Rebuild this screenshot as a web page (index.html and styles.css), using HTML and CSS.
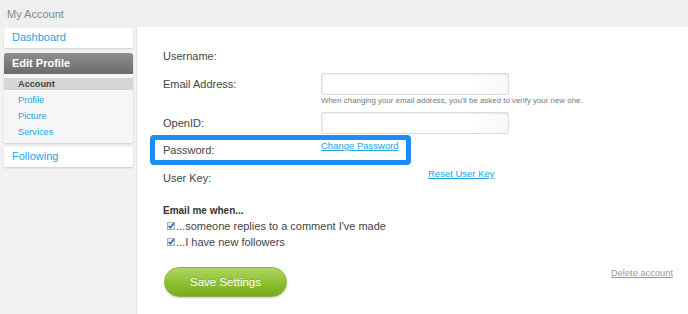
FILE: index.html
```html
<!DOCTYPE html>
<html lang="en">
<head>
  <meta charset="UTF-8" />
  <title>My Account</title>
  <link rel="stylesheet" href="styles.css">
</head>
<body>

  <header class="topbar">My Account</header>

  <div class="layout">
    <aside class="sidebar">
      <a class="side-card" href="#dashboard">Dashboard</a>

      <div class="side-group">
        <div class="side-group-title">Edit Profile</div>
        <ul class="side-sub">
          <li class="active">Account</li>
          <li><a href="#profile">Profile</a></li>
          <li><a href="#picture">Picture</a></li>
          <li><a href="#services">Services</a></li>
        </ul>
      </div>

      <a class="side-card" href="#following">Following</a>
    </aside>

    <main class="content">
      <div class="field field-username">
        <label>Username:</label>
        <span></span>
      </div>

      <div class="field field-email">
        <label>Email Address:</label>
        <input type="text" class="text-input">
      </div>
      <p class="hint">When changing your email address, you'll be asked to verify your new one.</p>

      <div class="field field-openid">
        <label>OpenID:</label>
        <input type="text" class="text-input">
      </div>

      <div class="field field-password">
        <label>Password:</label>
        <a href="#password" class="top-link">Change Password</a>
      </div>

      <div class="field field-key">
        <label>User Key:</label>
        <a href="#key" class="top-link reset-link">Reset User Key</a>
      </div>

      <h4 class="notify-title">Email me when...</h4>
      <label class="check-row">
        <span class="check"><svg viewBox="0 0 8 8" width="8" height="8"><rect x="0.5" y="0.5" width="7" height="7" fill="#eef2f8" stroke="#a4adb9"/><path d="M1.6 3.9 L3.3 5.8 L6.8 1.2" fill="none" stroke="#2a63b8" stroke-width="1.5"/></svg></span>
        ...someone replies to a comment I've made
      </label>
      <label class="check-row">
        <span class="check"><svg viewBox="0 0 8 8" width="8" height="8"><rect x="0.5" y="0.5" width="7" height="7" fill="#eef2f8" stroke="#a4adb9"/><path d="M1.6 3.9 L3.3 5.8 L6.8 1.2" fill="none" stroke="#2a63b8" stroke-width="1.5"/></svg></span>
        ...I have new followers
      </label>

      <div class="actions">
        <button class="save-btn">Save Settings</button>
        <a href="#delete" class="delete-link">Delete account</a>
      </div>
    </main>
  </div>

</body>
</html>
```

FILE: styles.css
```css
:root {
  --link-color: #22a5e2;
  --label-color: #444;
  --highlight: #1b8df7;
}

* {
  margin: 0;
  padding: 0;
  box-sizing: border-box;
  font-family: 'Liberation Sans', Arial, sans-serif;
}

body {
  width: 688px;
  height: 314px;
  overflow: hidden;
  background: #fff;
  display: flex;
  flex-direction: column;
}

.topbar {
  height: 27px;
  padding-left: 7px;
  line-height: 26px;
  font-size: 11px;
  color: #888;
  background: #efefef;
  border-top: 1px solid #f6f6f6;
}

.layout {
  flex: 1;
  display: flex;
}

/* sidebar */

.sidebar {
  width: 137px;
  background: #f2f2f2;
  border-right: 1px solid #e3e3e3;
  padding: 1px 3px 0 4px;
  display: flex;
  flex-direction: column;
  gap: 4.5px;
}

.side-card {
  display: block;
  height: 20px;
  line-height: 19px;
  padding-left: 8px;
  font-size: 11px;
  color: var(--link-color);
  text-decoration: none;
  background: #fff;
  border-radius: 2px;
  box-shadow: 0 1px 2px rgba(0, 0, 0, 0.15);
}

.side-group {
  border-radius: 3px;
  box-shadow: 0 1px 2px rgba(0, 0, 0, 0.15);
  overflow: hidden;
}

.side-group-title {
  height: 21px;
  line-height: 20px;
  padding-left: 8px;
  font-size: 11px;
  font-weight: bold;
  color: #fff;
  background: linear-gradient(#8e8e8e, #6b6b6b);
}

.side-sub {
  list-style: none;
  background: #f6f6f6;
  padding: 4.5px 0;
  display: flex;
  flex-direction: column;
  gap: 4px;
}

.side-sub li {
  height: 12px;
  line-height: 12px;
  padding-left: 14px;
  font-size: 9.2px;
}

.side-sub li.active {
  background: #d6d6d6;
  color: #444;
  font-weight: bold;
}

.side-sub a {
  color: var(--link-color);
  text-decoration: none;
}

/* form */

.content {
  flex: 1;
  padding: 19px 15px 0 26px;
  display: flex;
  flex-direction: column;
}

.field {
  display: grid;
  grid-template-columns: 158px auto;
  align-items: center;
  justify-items: start;
  min-height: 20px;
}

.field label {
  font-size: 11px;
  color: var(--label-color);
}

.field-email {
  margin-top: 7px;
}

.field-openid {
  margin-top: 6px;
}

.text-input {
  width: 188px;
  height: 22px;
  border: 1px solid #dcdcdc;
  border-radius: 2px;
  background: linear-gradient(to right, #fff 80%, #f7f8fa);
  box-shadow: inset 1px 1px 2px rgba(0, 0, 0, 0.08);
}

.hint {
  margin: 1px 0 0 158px;
  font-size: 7.9px;
  line-height: 10px;
  color: #777;
  white-space: nowrap;
}

.field-password {
  margin: 1px 0 0 -13px;
  width: 261px;
  height: 30px;
  padding-left: 8px;
  border: 5px solid var(--highlight);
  border-radius: 4px;
}

.field-key {
  margin-top: 3px;
}

.top-link {
  align-self: start;
  line-height: 12px;
  font-size: 9.5px;
  color: var(--link-color);
}

.reset-link {
  margin-left: 107px;
}

.notify-title {
  margin-top: 16px;
  font-size: 10px;
  line-height: 14px;
  color: #333;
}

.check-row {
  display: flex;
  align-items: center;
  gap: 1px;
  height: 16px;
  padding-left: 4px;
  font-size: 11px;
  color: var(--label-color);
}

.check {
  display: flex;
  width: 8px;
  height: 8px;
}

.actions {
  margin-top: 17px;
  display: flex;
  justify-content: space-between;
  align-items: flex-start;
}

.save-btn {
  margin-left: 1px;
  width: 123px;
  height: 30px;
  border: 1px solid #86b43a;
  border-radius: 15px;
  background: linear-gradient(#afd662, #8cbf30 55%, #78aa20);
  box-shadow: 0 1px 2px rgba(0, 0, 0, 0.2);
  font-size: 11.5px;
  color: #fff;
  text-shadow: 0 -1px 0 rgba(0, 0, 0, 0.12);
}

.delete-link {
  line-height: 12px;
  font-size: 9.3px;
  color: #999;
}
```
